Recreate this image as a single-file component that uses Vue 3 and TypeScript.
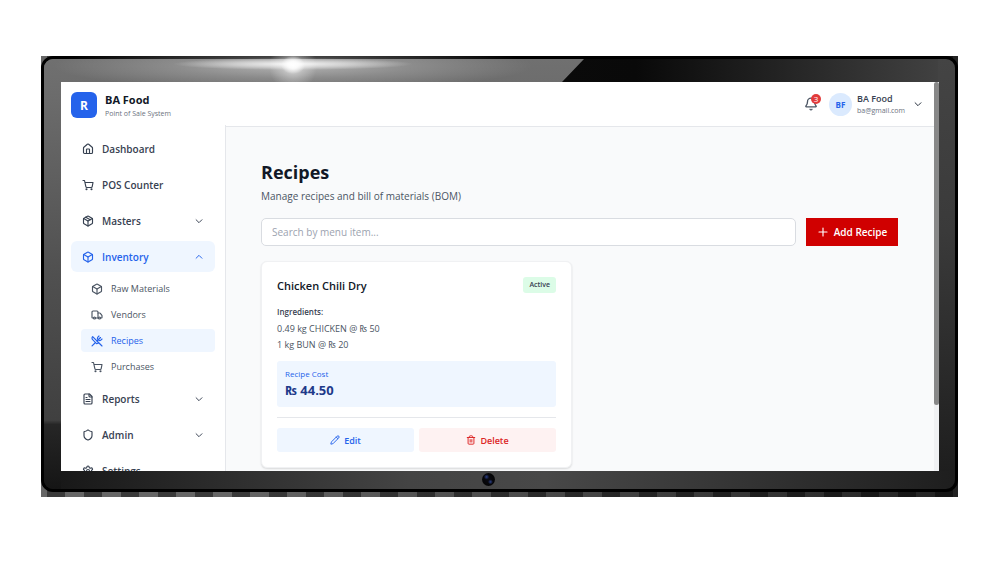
<script setup lang="ts">
import { ref } from 'vue'

interface NavItem {
  label: string
  icon: string
  group?: boolean
  open?: boolean
  children?: { label: string; icon: string; active?: boolean }[]
}

const icons: Record<string, string[]> = {
  home: ['M3 10a2 2 0 0 1 .7-1.5l7-6a2 2 0 0 1 2.6 0l7 6A2 2 0 0 1 21 10v9a2 2 0 0 1-2 2H5a2 2 0 0 1-2-2z', 'M15 21v-8a1 1 0 0 0-1-1h-4a1 1 0 0 0-1 1v8'],
  cart: ['M2 3h3l2.7 12.4a2 2 0 0 0 2 1.6h8.7a2 2 0 0 0 2-1.6L22 7H6', 'M8 20.5a1 1 0 1 0 2 0a1 1 0 1 0-2 0', 'M18 20.5a1 1 0 1 0 2 0a1 1 0 1 0-2 0'],
  pack: ['M11 21.7a2 2 0 0 0 2 0l7-4a2 2 0 0 0 1-1.7V8a2 2 0 0 0-1-1.7l-7-4a2 2 0 0 0-2 0l-7 4A2 2 0 0 0 3 8v8a2 2 0 0 0 1 1.7z', 'M12 22V12', 'M3.3 7L12 12l8.7-5', 'M7.5 4.3l9 5.1'],
  box: ['M11 21.7a2 2 0 0 0 2 0l7-4a2 2 0 0 0 1-1.7V8a2 2 0 0 0-1-1.7l-7-4a2 2 0 0 0-2 0l-7 4A2 2 0 0 0 3 8v8a2 2 0 0 0 1 1.7z', 'M12 22V12', 'M3.3 7L12 12l8.7-5'],
  truck: ['M14 18V6a2 2 0 0 0-2-2H4a2 2 0 0 0-2 2v11a1 1 0 0 0 1 1h2', 'M15 18H9', 'M19 18h2a1 1 0 0 0 1-1v-3.7a1 1 0 0 0-.2-.6l-3.5-4.3a1 1 0 0 0-.8-.4H14', 'M5 18a2 2 0 1 0 4 0a2 2 0 1 0-4 0', 'M15 18a2 2 0 1 0 4 0a2 2 0 1 0-4 0'],
  utensils: ['M16 2l-2.3 2.3a3 3 0 0 0 0 4.2l1.8 1.8a3 3 0 0 0 4.2 0L22 8', 'M15 15L3.3 3.3a4.2 4.2 0 0 0 0 6l7.3 7.3c.7.7 2 .7 2.8 0L15 15zm0 0l7 7', 'M2.1 21.8l6.4-6.3', 'M19 5l-7 7'],
  file: ['M15 2H6a2 2 0 0 0-2 2v16a2 2 0 0 0 2 2h12a2 2 0 0 0 2-2V7z', 'M14 2v4a2 2 0 0 0 2 2h4', 'M10 9H8', 'M16 13H8', 'M16 17H8'],
  shield: ['M20 13c0 5-3.5 7.5-7.7 9a1 1 0 0 1-.6 0C7.5 20.5 4 18 4 13V6a1 1 0 0 1 1-1c2 0 4.5-1.2 6.2-2.7a1.2 1.2 0 0 1 1.6 0C14.5 3.8 17 5 19 5a1 1 0 0 1 1 1z'],
  gear: ['M12.2 2h-.4a2 2 0 0 0-2 2v.2a2 2 0 0 1-1 1.7l-.4.3a2 2 0 0 1-2 0l-.2-.1a2 2 0 0 0-2.7.7l-.2.4a2 2 0 0 0 .7 2.7l.2.1a2 2 0 0 1 1 1.7v.5a2 2 0 0 1-1 1.8l-.2.1a2 2 0 0 0-.7 2.7l.2.4a2 2 0 0 0 2.7.7l.2-.1a2 2 0 0 1 2 0l.4.3a2 2 0 0 1 1 1.7v.2a2 2 0 0 0 2 2h.4a2 2 0 0 0 2-2v-.2a2 2 0 0 1 1-1.7l.4-.3a2 2 0 0 1 2 0l.2.1a2 2 0 0 0 2.7-.7l.2-.4a2 2 0 0 0-.7-2.7l-.2-.1a2 2 0 0 1-1-1.8v-.5a2 2 0 0 1 1-1.7l.2-.1a2 2 0 0 0 .7-2.7l-.2-.4a2 2 0 0 0-2.7-.7l-.2.1a2 2 0 0 1-2 0l-.4-.3a2 2 0 0 1-1-1.7V4a2 2 0 0 0-2-2z', 'M9 12a3 3 0 1 0 6 0a3 3 0 1 0-6 0'],
  bell: ['M10.3 21a2 2 0 0 0 3.4 0', 'M3.3 15.3A1 1 0 0 0 4 17h16a1 1 0 0 0 .7-1.7C19.4 14 18 12.5 18 8A6 6 0 0 0 6 8c0 4.5-1.4 6-2.7 7.3'],
  plus: ['M4 12h16', 'M12 4v16'],
  pencil: ['M21.2 6.8a1 1 0 0 0-4-4L3.8 16.2a2 2 0 0 0-.5.8L2 21.4a.5.5 0 0 0 .6.6L7 20.7a2 2 0 0 0 .8-.5z', 'M15 5l4 4'],
  trash: ['M3 6h18', 'M19 6v14a2 2 0 0 1-2 2H7a2 2 0 0 1-2-2V6', 'M8 6V4a2 2 0 0 1 2-2h4a2 2 0 0 1 2 2v2', 'M10 11v6', 'M14 11v6'],
  down: ['M5 9l7 7l7-7'],
  up: ['M5 15l7-7l7 7'],
}

const nav = ref<NavItem[]>([
  { label: 'Dashboard', icon: 'home' },
  { label: 'POS Counter', icon: 'cart' },
  { label: 'Masters', icon: 'pack', group: true },
  {
    label: 'Inventory',
    icon: 'box',
    group: true,
    open: true,
    children: [
      { label: 'Raw Materials', icon: 'box' },
      { label: 'Vendors', icon: 'truck' },
      { label: 'Recipes', icon: 'utensils', active: true },
      { label: 'Purchases', icon: 'cart' },
    ],
  },
  { label: 'Reports', icon: 'file', group: true },
  { label: 'Admin', icon: 'shield', group: true },
  { label: 'Settings', icon: 'gear' },
])

const search = ref('')
const ingredients = ['0.49 kg CHICKEN @ ₨ 50', '1 kg BUN @ ₨ 20']

function toggle(item: NavItem) {
  if (item.children) item.open = !item.open
}
</script>

<template>
  <div class="stage">
    <div class="monitor">
      <div class="bezel">
        <div class="glare"></div>
        <div class="flare"></div>
        <div class="screen">
          <aside class="sidebar">
            <div class="brand">
              <span class="logo">R</span>
              <div>
                <div class="brand-name">BA Food</div>
                <div class="brand-sub">Point of Sale System</div>
              </div>
            </div>
            <nav class="nav">
              <div v-for="item in nav" :key="item.label">
                <button type="button" class="nav-item" :class="{ open: item.open }" @click="toggle(item)">
                  <svg class="icon" viewBox="0 0 24 24"><path v-for="d in icons[item.icon]" :key="d" :d="d" /></svg>
                  <span class="grow">{{ item.label }}</span>
                  <svg v-if="item.group" class="chevron" viewBox="0 0 24 24"><path :d="icons[item.open ? 'up' : 'down'][0]" /></svg>
                </button>
                <div v-if="item.open" class="sub">
                  <a v-for="c in item.children" :key="c.label" href="#" class="sub-item" :class="{ active: c.active }">
                    <svg class="icon" viewBox="0 0 24 24"><path v-for="d in icons[c.icon]" :key="d" :d="d" /></svg>
                    <span>{{ c.label }}</span>
                  </a>
                </div>
              </div>
            </nav>
          </aside>

          <div class="content">
            <header class="topbar">
              <button type="button" class="bell" aria-label="Notifications">
                <svg class="bell-icon" viewBox="0 0 24 24"><path v-for="d in icons.bell" :key="d" :d="d" /></svg>
                <span class="count">3</span>
              </button>
              <button type="button" class="user">
                <span class="avatar">BF</span>
                <span class="who">
                  <span class="who-name">BA Food</span>
                  <span class="who-mail">ba@gmail.com</span>
                </span>
                <svg class="chevron" viewBox="0 0 24 24"><path :d="icons.down[0]" /></svg>
              </button>
            </header>

            <main class="main">
              <h1>Recipes</h1>
              <p class="lead">Manage recipes and bill of materials (BOM)</p>
              <div class="tools">
                <input v-model="search" type="text" aria-label="Search by menu item" placeholder="Search by menu item..." />
                <button type="button" class="add">
                  <svg class="icon" viewBox="0 0 24 24"><path v-for="d in icons.plus" :key="d" :d="d" /></svg>
                  Add Recipe
                </button>
              </div>
              <div class="cards">
                <article class="card">
                  <div class="card-head">
                    <h2>Chicken Chili Dry</h2>
                    <span class="badge">Active</span>
                  </div>
                  <h3>Ingredients:</h3>
                  <ul>
                    <li v-for="i in ingredients" :key="i">{{ i }}</li>
                  </ul>
                  <div class="cost">
                    <div class="cost-label">Recipe Cost</div>
                    <div class="cost-value">₨ 44.50</div>
                  </div>
                  <div class="actions">
                    <button type="button" class="edit">
                      <svg class="icon" viewBox="0 0 24 24"><path v-for="d in icons.pencil" :key="d" :d="d" /></svg>
                      Edit
                    </button>
                    <button type="button" class="delete">
                      <svg class="icon" viewBox="0 0 24 24"><path v-for="d in icons.trash" :key="d" :d="d" /></svg>
                      Delete
                    </button>
                  </div>
                </article>
              </div>
            </main>
          </div>
          <div class="scrollbar"><div class="thumb"></div></div>
        </div>
        <span class="camera"></span>
      </div>
    </div>
  </div>
</template>

<style>
body {
  background: #fff;
}
</style>

<style scoped>
* {
  box-sizing: border-box;
}
.stage {
  height: 100vh;
  padding: 56px 42px 83px 41px;
  font-family: 'Open Sans', 'Noto Sans', sans-serif;
  color: #1f2937;
}
.monitor {
  height: 100%;
  padding-bottom: 5px;
  background:
    linear-gradient(90deg, #0000 20%, #000a 100%),
    repeating-linear-gradient(90deg, #666 0 6px, #3a3a3a 6px 24px, #666 24px 37px);
}
.bezel {
  position: relative;
  height: 100%;
  padding: 23px 16px 18px 17px;
  border: 3px solid #000;
  border-radius: 12px;
  background:
    linear-gradient(90deg, #161616 0, #444 40%, #484848 55%, #1e1e1e 100%) bottom / 100% 18px no-repeat,
    linear-gradient(180deg, #444 0, #3a3a3a 40%, #1c1c1c 100%) right / 17px 100% no-repeat,
    linear-gradient(180deg, #555 0, #2a2a2a 80%, #141414 100%) left / 17px 100% no-repeat,
    linear-gradient(90deg, #111 0, #090909 65%, #222 80%, #444 100%);
}
.glare {
  position: absolute;
  inset: 0 auto 0 0;
  width: 540px;
  border-radius: 9px 0 0 9px;
  background: linear-gradient(180deg, #707070 0, #6c6c6c 8%, #505050 50%, #404040 84%, #262626 85%, #151515 100%);
  clip-path: polygon(0 0, 100% 0, 518px 23px, 17px 23px, 17px 100%, 0 100%);
}
.flare {
  position: absolute;
  inset: -3px auto auto 0;
  width: 540px;
  height: 26px;
  background:
    radial-gradient(ellipse 12px 9px at 249px 9px, #fff 0, #fffc 40%, #fff0 100%),
    radial-gradient(ellipse 24px 26px at 249px 10px, #fff9 0, #fff4 50%, #fff0 100%),
    radial-gradient(ellipse 120px 6px at 249px 8px, #fffd 0, #fff7 50%, #fff0 100%),
    radial-gradient(ellipse 240px 24px at 249px 10px, #fff7 0, #fff3 50%, #fff0 100%);
}
.screen {
  position: relative;
  display: flex;
  height: 100%;
  overflow: hidden;
  background: #f9fafb;
}
.camera {
  position: absolute;
  bottom: 3px;
  left: calc(49% - 8px);
  width: 13px;
  height: 13px;
  border-radius: 50%;
  background:
    radial-gradient(circle at 35% 30%, #2b3f86 0, #2b3f8600 22%),
    radial-gradient(circle at 65% 68%, #2b3f86 0, #2b3f8600 20%),
    radial-gradient(circle, #0a0a12 0, #050507 60%, #111 100%);
}
svg {
  fill: none;
  stroke: currentColor;
  stroke-width: 2.3;
  stroke-linecap: round;
  stroke-linejoin: round;
  flex: none;
}
button {
  font: inherit;
  color: inherit;
  border: 0;
  padding: 0;
  background: none;
  cursor: pointer;
}
.icon {
  width: 12px;
  height: 12px;
}
.chevron {
  width: 10px;
  height: 10px;
}
.grow {
  flex: 1;
  text-align: left;
}
.sidebar {
  flex: none;
  width: 165px;
  background: #fff;
}
.brand {
  display: flex;
  align-items: flex-start;
  gap: 8px;
  height: 43px;
  padding: 10px 10px 0;
}
.logo {
  display: grid;
  place-items: center;
  width: 26px;
  height: 26px;
  border-radius: 6px;
  background: #2563eb;
  color: #fff;
  font-size: 12px;
  font-weight: 700;
}
.brand-name {
  font-size: 11px;
  line-height: 16px;
  font-weight: 700;
  color: #111827;
}
.brand-sub {
  font-size: 7px;
  line-height: 12px;
  color: #6b7280;
}
.nav {
  display: flex;
  flex-direction: column;
  gap: 5px;
  padding: 8px 10px;
  border-right: 1px solid #e5e7eb;
}
.nav-item {
  display: flex;
  align-items: center;
  gap: 8px;
  width: 100%;
  height: 31px;
  padding: 0 11px;
  border-radius: 6px;
  font-size: 10px;
  font-weight: 600;
  color: #374151;
}
.nav-item.open {
  background: #eff6ff;
  color: #2563eb;
}
.sub {
  display: flex;
  flex-direction: column;
  gap: 3px;
  padding: 5px 0 0 10px;
}
.sub-item {
  display: flex;
  align-items: center;
  gap: 8px;
  height: 23px;
  padding: 0 10px;
  border-radius: 4px;
  font-size: 9px;
  color: #4b5563;
  text-decoration: none;
}
.sub-item.active {
  background: #eff6ff;
  color: #2563eb;
}
.content {
  flex: 1;
  min-width: 0;
}
.topbar {
  display: flex;
  align-items: center;
  justify-content: flex-end;
  gap: 11px;
  height: 45px;
  padding-right: 11px;
  background: #fff;
  border-bottom: 1px solid #e5e7eb;
}
.bell {
  position: relative;
  display: flex;
  color: #4b5563;
}
.bell-icon {
  width: 14px;
  height: 14px;
}
.count {
  position: absolute;
  top: -3px;
  right: -3px;
  width: 10px;
  height: 10px;
  border-radius: 50%;
  background: #e23b3b;
  color: #fff;
  font-size: 8px;
  line-height: 10px;
}
.user {
  display: flex;
  align-items: center;
  gap: 5px;
}
.avatar {
  display: grid;
  place-items: center;
  width: 23px;
  height: 23px;
  border-radius: 50%;
  background: #dbeafe;
  color: #2563eb;
  font-size: 8px;
  font-weight: 700;
}
.who {
  display: flex;
  flex-direction: column;
  min-width: 51px;
  padding-top: 2px;
  text-align: left;
}
.who-name {
  font-size: 9px;
  line-height: 12px;
  font-weight: 600;
  color: #374151;
}
.who-mail {
  font-size: 7px;
  line-height: 12px;
  color: #6b7280;
}
.main {
  padding: 31px 36px 31px 35px;
}
h1,
h2,
h3,
p,
ul {
  margin: 0;
  padding: 0;
}
h1 {
  font-size: 18px;
  line-height: 28px;
  font-weight: 700;
  color: #111827;
}
.lead {
  margin-top: 2px;
  font-size: 10px;
  line-height: 16px;
  color: #4b5563;
}
.tools {
  display: flex;
  gap: 10px;
  margin-top: 14px;
}
input {
  flex: 1;
  min-width: 0;
  height: 28px;
  padding: 0 10px;
  border: 1px solid #d9dce1;
  border-radius: 5px;
  background: #fff;
  font: inherit;
  font-size: 10px;
}
input::placeholder {
  color: #9ca3af;
}
.add {
  display: flex;
  align-items: center;
  justify-content: center;
  gap: 5px;
  width: 92px;
  background: #d00000;
  color: #fff;
  font-size: 10px;
  font-weight: 600;
}
.cards {
  display: grid;
  grid-template-columns: 1fr 1fr;
  gap: 15px;
  margin-top: 15px;
}
.card {
  padding: 15px;
  border: 1px solid #f0f1f3;
  border-radius: 6px;
  background: #fff;
  box-shadow: 0 1px 2px #0002;
}
.card-head {
  display: flex;
  align-items: flex-start;
  justify-content: space-between;
}
h2 {
  font-size: 11px;
  line-height: 18px;
  font-weight: 600;
  color: #111827;
}
.badge {
  padding: 0 6px;
  border-radius: 3px;
  background: #dcfce7;
  font-size: 7px;
  line-height: 16px;
  font-weight: 600;
  color: #374151;
}
h3 {
  margin-top: 9px;
  font-size: 8px;
  line-height: 16px;
  font-weight: 600;
  color: #374151;
}
ul {
  list-style: none;
  margin-top: 1px;
}
li {
  font-size: 9px;
  line-height: 16px;
  color: #4b5563;
}
.cost {
  margin-top: 8px;
  padding: 6px 8px 7px;
  border-radius: 3px;
  background: #eff6ff;
}
.cost-label {
  font-size: 8px;
  line-height: 13px;
  color: #2563eb;
}
.cost-value {
  font-size: 13px;
  line-height: 20px;
  font-weight: 700;
  color: #1e3a8a;
}
.actions {
  display: grid;
  grid-template-columns: 1fr 1fr;
  gap: 5px;
  margin-top: 10px;
  padding-top: 10px;
  border-top: 1px solid #e5e7eb;
}
.actions button {
  display: flex;
  align-items: center;
  justify-content: center;
  gap: 4px;
  height: 24px;
  border-radius: 3px;
  font-size: 9px;
  font-weight: 600;
}
.actions .icon {
  width: 10px;
  height: 10px;
}
.actions .edit {
  background: #eff6ff;
  color: #2563eb;
}
.actions .delete {
  background: #fef2f2;
  color: #dc2626;
}
.scrollbar {
  flex: none;
  width: 5px;
  background: #f0f1f3;
}
.thumb {
  height: 83%;
  border-radius: 3px;
  background: #888;
}
</style>
